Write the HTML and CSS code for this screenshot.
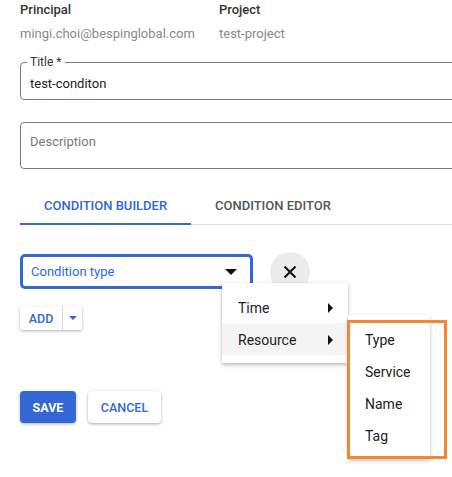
FILE: index.html
```html
<!DOCTYPE html>
<html>
<head>
<meta charset="utf-8">
<link rel="stylesheet" href="styles.css">
</head>
<body>
<div class="page">
  <div class="info">
    <div class="info-col principal">
      <div class="info-label">Principal</div>
      <div class="info-value">mingi.choi@bespinglobal.com</div>
    </div>
    <div class="info-col">
      <div class="info-label">Project</div>
      <div class="info-value">test-project</div>
    </div>
  </div>

  <div class="field title-field">
    <span class="field-label">Title *</span>
    <div class="field-value">test-conditon</div>
  </div>

  <div class="field desc-field">
    <div class="field-placeholder">Description</div>
  </div>

  <div class="tabs">
    <div class="tab active">CONDITION BUILDER</div>
    <div class="tab">CONDITION EDITOR</div>
  </div>

  <div class="builder-row">
    <div class="select">
      <span>Condition type</span>
      <span class="caret"></span>
    </div>
    <div class="close-btn">
      <svg width="14" height="14" viewBox="0 0 14 14"><path d="M1.5 1.5 L12.5 12.5 M12.5 1.5 L1.5 12.5" stroke="#111" stroke-width="2" fill="none"/></svg>
    </div>
    <div class="menu">
      <div class="menu-item"><span>Time</span><span class="tri"></span></div>
      <div class="menu-item hl"><span>Resource</span><span class="tri"></span></div>
    </div>
    <div class="submenu">
      <div class="sub-item">Type</div>
      <div class="sub-item">Service</div>
      <div class="sub-item">Name</div>
      <div class="sub-item">Tag</div>
    </div>
    <div class="highlight-box"></div>
  </div>

  <div class="add-btn">
    <span class="add-label">ADD</span>
    <span class="add-arrow"><span class="caret small"></span></span>
  </div>

  <div class="actions">
    <div class="btn save">SAVE</div>
    <div class="btn cancel">CANCEL</div>
  </div>
</div>
</body>
</html>
```
FILE: styles.css
```css
* { box-sizing: border-box; }
html, body { margin: 0; padding: 0; background: #fff; }
body { font-family: Roboto, "Liberation Sans", sans-serif; width: 452px; height: 477px; overflow: hidden; }
.page { padding: 3px 0 0 20px; width: 452px; height: 477px; overflow: hidden; position: relative; }

.info { display: flex; }
.info-col.principal { width: 199px; }
.info-label { font-size: 13px; font-weight: 500; color: #333; line-height: 14px; }
.info-value { font-size: 13px; color: #8a8a8a; margin-top: 9px; line-height: 16px; }

.field { position: relative; border: 1px solid #7b7b7b; border-radius: 4px; width: 560px; flex-shrink: 0; }
.title-field { margin-top: 20px; height: 38px; padding: 13px 0 0 9px; }
.field-label { position: absolute; top: -8px; left: 6px; background: #fff; padding: 0 4px 0 3px; font-size: 12px; color: #333; line-height: 14px; }
.field-value { font-size: 13px; color: #222; line-height: 16px; }
.desc-field { margin-top: 22px; height: 47px; padding: 11px 0 0 9px; }
.field-placeholder { font-size: 13px; color: #777; line-height: 16px; }

.tabs { display: flex; margin-top: 29px; border-bottom: 1px solid #dedede; width: 560px; height: 27px; }
.tab { font-size: 13px; font-weight: 500; color: #555; line-height: 14px; padding-top: 1px; }
.tab.active { color: #3367d6; width: 171px; padding-left: 24px; border-bottom: 2px solid #3367d6; height: 27px; }
.tab:not(.active) { margin-left: 24px; }

.builder-row { position: relative; display: flex; align-items: center; margin-top: 29px; height: 35px; }
.select { width: 233px; height: 35px; border: 3px solid #3367d6; border-radius: 5px; display: flex; align-items: center; justify-content: space-between; padding: 0 13px 0 8px; font-size: 13px; color: #3367d6; }
.caret { width: 0; height: 0; border-left: 6px solid transparent; border-right: 6px solid transparent; border-top: 6px solid #111; }
.caret.small { border-left-width: 4.5px; border-right-width: 4.5px; border-top-width: 4.5px; border-top-color: #3367d6; }
.close-btn { width: 40px; height: 40px; border-radius: 50%; background: #ebebeb; margin-left: 17px; display: flex; align-items: center; justify-content: center; }

.menu { position: absolute; left: 202px; top: 29px; width: 126px; background: #fff; box-shadow: 0 2px 4px rgba(0,0,0,0.25), 0 0 2px rgba(0,0,0,0.08); padding: 8px 0; z-index: 2; }
.menu-item { height: 32px; display: flex; align-items: center; justify-content: space-between; padding: 1px 15px 0 16px; font-size: 14px; color: #222; }
.menu-item.hl { background: #f4f4f4; }
.tri { width: 0; height: 0; border-top: 5px solid transparent; border-bottom: 5px solid transparent; border-left: 5px solid #111; }

.submenu { position: absolute; left: 328px; top: 61px; width: 82px; height: 144px; background: #fff; box-shadow: 0 2px 4px rgba(0,0,0,0.22), 0 0 2px rgba(0,0,0,0.08); padding: 8px 0; z-index: 3; }
.sub-item { height: 32px; display: flex; align-items: center; padding: 1px 0 0 17px; font-size: 14px; color: #222; }
.highlight-box { position: absolute; left: 327px; top: 66px; width: 100px; height: 139px; border: 3px solid #f58634; z-index: 4; }

.add-btn { display: flex; margin-top: 17px; width: 62px; height: 24px; box-shadow: 0 1px 3px rgba(0,0,0,0.3); border-radius: 2px; background: #fff; }
.add-label { width: 43px; display: flex; align-items: center; justify-content: center; font-size: 12.5px; font-weight: 500; color: #3367d6; border-right: 1px solid #ddd; }
.add-arrow { flex: 1; display: flex; align-items: center; justify-content: center; }

.actions { display: flex; gap: 12px; margin-top: 61px; }
.btn { height: 32px; display: flex; align-items: center; justify-content: center; font-size: 12.5px; font-weight: 500; border-radius: 4px; }
.save { width: 56px; background: #3367d6; color: #fff; box-shadow: 0 1px 3px rgba(0,0,0,0.3); font-weight: 700; }
.cancel { width: 73px; background: #fff; color: #3367d6; box-shadow: 0 1px 3px rgba(0,0,0,0.35); }
```
